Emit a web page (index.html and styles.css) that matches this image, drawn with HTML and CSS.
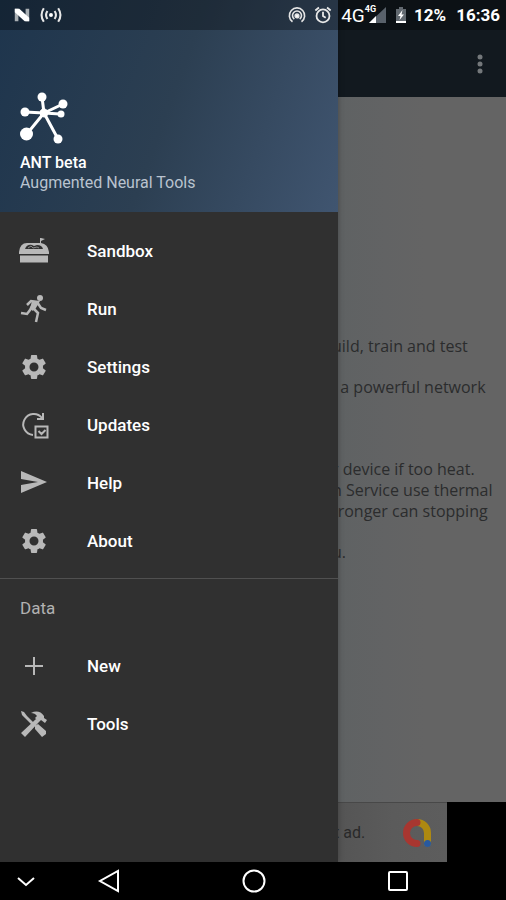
FILE: index.html
```html
<!DOCTYPE html>
<html lang="en">
<head>
<meta charset="utf-8">
<meta name="viewport" content="width=device-width, initial-scale=1">
<title>ANT beta</title>
<link rel="stylesheet" href="styles.css">
</head>
<body>
<svg hidden>
  <symbol id="gear" viewBox="0 0 24 24"><path d="M19.14 12.94c.04-.3.06-.61.06-.94s-.02-.64-.07-.94l2.03-1.58a.49.49 0 0 0 .12-.61l-1.92-3.32a.49.49 0 0 0-.59-.22l-2.39.96a7 7 0 0 0-1.62-.94l-.36-2.54a.48.48 0 0 0-.48-.41h-3.84a.48.48 0 0 0-.47.41l-.36 2.54c-.59.24-1.13.57-1.62.94l-2.39-.96a.48.48 0 0 0-.59.22L2.74 8.87a.48.48 0 0 0 .12.61l2.03 1.58a6 6 0 0 0 0 1.88l-2.03 1.58a.49.49 0 0 0-.12.61l1.92 3.32c.12.22.37.29.59.22l2.39-.96c.5.38 1.03.7 1.62.94l.36 2.54c.05.24.24.41.48.41h3.84c.24 0 .44-.17.47-.41l.36-2.54c.59-.24 1.13-.56 1.62-.94l2.39.96c.22.08.47 0 .59-.22l1.92-3.32a.48.48 0 0 0-.12-.61zM12 15.6a3.6 3.6 0 1 1 0-7.2 3.6 3.6 0 0 1 0 7.2z"/></symbol>
</svg>
<div class="screen">
  <div class="status">
    <svg class="status-icon" viewBox="0 0 20 20"><path d="M2 3h4v14H2zM14 3h4v14h-4z" fill="#aab0b4"/><path d="M2 3h5l11 10v4h-5L2 7z" fill="#fff"/></svg>
    <svg class="status-icon wide" viewBox="0 0 24 20" fill="none" stroke="#e8e8e8"><circle cx="12" cy="10" r="2.200" fill="#fff" stroke="none"/><path d="M8 5.500q-3 4.500 0 9M16 5.500q3 4.500 0 9M4 2.500q-5 7.500 0 15M20 2.500q5 7.500 0 15" stroke-width="2.300"/></svg>
    <span class="spacer"></span>
    <svg class="status-icon hotspot" viewBox="0 0 20 20" fill="none" stroke="#e4e4e4" stroke-width="1.800"><circle cx="10" cy="11" r="2" fill="#fff"/><path d="M5 17.500a8.500 8.500 0 1 1 10 0M7 14.500a5 5 0 1 1 6 0"/></svg>
    <svg class="status-icon alarm" viewBox="0 0 20 20" fill="none" stroke="#e8e8e8" stroke-width="2"><circle cx="10" cy="11" r="7.200"/><path d="M10 6.500V11l3 2M1.500 5l4-3.300M18.500 5l-4-3.300"/></svg>
    <span class="network">4G</span><span class="network-small">4G</span>
    <svg class="signal" viewBox="0 0 18 18"><path d="M18 1v16H1z" fill="#59616a"/><path d="M8 10v7H1z" fill="#fff"/></svg>
    <svg class="battery" viewBox="0 0 12 18"><path d="M4 1h4v2h3v14H1V3h3z" fill="#626970"/><path d="M1 15h10v2H1zM7.500 4 3 10h2.500L4.500 14 9 8.500H6.500z" fill="#fff"/></svg>
    <span class="status-text">12%</span>
    <span class="status-text clock">16:36</span>
  </div>

  <header class="appbar">
    <button class="more" aria-label="More options"><svg viewBox="0 0 6 20" fill="#74787b"><circle cx="3" cy="3" r="2.500"/><circle cx="3" cy="10" r="2.500"/><circle cx="3" cy="17" r="2.500"/></svg></button>
  </header>

  <main class="content">
    <p>uild, train and test</p>
    <p class="section-end">&nbsp; a powerful network</p>
    <p>r device if too heat.<br>n Service use thermal<br>tronger can stopping</p>
    <p>u.</p>
  </main>

  <div class="ad-row">
    <div class="ad">
      <span>t ad.</span>
      <svg class="ad-logo" viewBox="0 0 30 30" fill="none" stroke-width="7" stroke-linecap="round"><path d="M15 4.500a10.500 10.500 0 0 1 10.500 10.500v10" stroke="#ae8911"/><path d="M15 4.500a10.500 10.500 0 0 0 0 21" stroke="#a83630"/><circle cx="25.500" cy="25.500" r="3.500" fill="#28599f"/></svg>
    </div>
  </div>

  <aside class="drawer">
    <div class="account">
      <svg class="logo" viewBox="0 0 50 52" fill="#fff" stroke="#fff" stroke-linecap="round"><path d="m24 21-2-16M24 21 43 12M24 21 5 20M24 21l16 1M24 21 6 43M24 21l14 26" stroke-width="3"/><circle cx="24" cy="21" r="4"/><g stroke="none"><circle cx="22" cy="5" r="4.500"/><circle cx="43" cy="12" r="4.500"/><circle cx="5" cy="20" r="4.500"/><circle cx="41" cy="22" r="3.500"/><circle cx="6.500" cy="42" r="6.500"/><circle cx="38" cy="47" r="4.500"/></g></svg>
      <strong>ANT beta</strong>
      <span>Augmented Neural Tools</span>
    </div>
    <nav class="menu">
      <a href="#sandbox"><svg class="icon" viewBox="0 0 30 30"><path d="M0 16q1-9 8-9h13V2h1l4 1-4 2v2q7 1 8 9v2H0z"/><path d="M1 19.500h28v7H1z"/><path d="M6 13q2-5 7-4l2 1 3-1q5 0 6 4z" fill="#303030"/><path d="m9 12 3-2 2 2 4-1 2 1" fill="none" stroke="#8a8a8a"/></svg>Sandbox</a>
      <a href="#run"><svg class="icon" viewBox="0 0 30 30"><circle cx="21" cy="4" r="3"/><path d="m8 11 4-4 7 1-4 7 4 4-2 9M15 8l-4 8-3 4-6-1M18 8l4 6 5 2" fill="none" stroke="#b8b8b8" stroke-width="2.500"/><path d="m13 7 6 1-5 9-3-2z"/></svg>Run</a>
      <a href="#settings"><svg class="icon"><use href="#gear"/></svg>Settings</a>
      <a href="#updates"><svg class="icon outline" viewBox="0 0 30 30"><path d="M14 25A10.500 10.500 0 1 1 23 8M24 3v6h-6M16.500 16.500h12v11h-12zM19.500 21l3 3 4-4"/></svg>Updates</a>
      <a href="#help"><svg class="icon" viewBox="0 0 30 30"><path d="m2 3 26 11L2 25v-8l17-3L2 11z"/></svg>Help</a>
      <a href="#about"><svg class="icon"><use href="#gear"/></svg>About</a>
    </nav>
    <nav class="menu data" aria-labelledby="data-title">
      <h2 id="data-title">Data</h2>
      <a href="#new"><svg class="icon" viewBox="0 0 30 30"><path d="M14 6h2v8h8v2h-8v8h-2v-8H6v-2h8z"/></svg>New</a>
      <a href="#tools"><svg class="icon" viewBox="0 0 30 30"><path d="m2 2 3 1 3 4 8 8-2 2-8-8-3-3zM16 17l3-2 8 7v3l-4 3-7-8zM2 24 17 10l3 3L6 28zM12 4q8-4 13 3v2l3 2-2 3-4-3-2 2-4-4 2-2q-2-3-6-3z"/></svg>Tools</a>
    </nav>
  </aside>

  <div class="system-nav">
    <button aria-label="Hide"><svg viewBox="0 0 24 24"><path d="m4 9 8 7 8-7"/></svg></button>
    <button aria-label="Back"><svg viewBox="0 0 24 24"><path d="M21 2v20L3 12z"/></svg></button>
    <button aria-label="Home"><svg viewBox="0 0 24 24"><circle cx="12" cy="12" r="10.500"/></svg></button>
    <button aria-label="Recent apps"><svg viewBox="0 0 24 24"><rect x="3" y="3" width="18" height="18" rx="1"/></svg></button>
  </div>
</div>
</body>
</html>
```
FILE: styles.css
```css
* { box-sizing: border-box; }

body {
  margin: 0;
  background: #000;
  font-family: Roboto, sans-serif;
}

button {
  padding: 0;
  border: 0;
  background: none;
}

svg { display: block; }
svg[hidden] { display: none; }

.screen {
  --drawer: 338px;
  position: relative;
  display: flex;
  flex-direction: column;
  min-height: 100vh;
  overflow: hidden;
}

.status {
  position: relative;
  z-index: 3;
  display: flex;
  align-items: center;
  height: 30px;
  padding: 0 6px 0 12px;
  background: rgba(0, 0, 0, 0.3);
  color: #fff;
}

.status-icon { width: 20px; height: 18px; }
.wide { width: 22px; margin-left: 8px; }
.hotspot { margin-right: 6px; }
.alarm { margin-right: 8px; }
.spacer { flex: 1; }

.network { font-size: 19px; }

.network-small {
  align-self: flex-start;
  padding-top: 5px;
  font-size: 9px;
  font-weight: 700;
  line-height: 9px;
}

.signal { width: 18px; height: 18px; margin-left: -8px; }
.battery { width: 12px; height: 18px; margin: 0 7px 0 9px; }
.status-text { font-size: 17px; font-weight: 700; }
.clock { margin-left: 10px; }

.appbar {
  display: flex;
  align-items: center;
  justify-content: flex-end;
  height: 97px;
  margin-top: -30px;
  padding: 30px 23px 0;
  background: #12191f;
}

.more svg { width: 6px; height: 20px; }

.content {
  flex: 1;
  padding: 239px 0 0 calc(var(--drawer) - 6px);
  background: linear-gradient(90deg, #5f6263 67%, #626364 76%, #646464 84%);
  color: #2b2c2d;
  font-family: "Open Sans", sans-serif;
  font-size: 16px;
  line-height: 21px;
  white-space: nowrap;
}

.content p { margin: 0 0 20px; }
.content .section-end { margin-bottom: 61px; }

.ad-row { background: #000; }

.ad {
  display: flex;
  align-items: center;
  justify-content: space-between;
  width: 447px;
  max-width: 100%;
  height: 60px;
  padding: 0 15px 0 calc(var(--drawer) - 4px);
  border-top: 1px solid #484848;
  background: linear-gradient(90deg, #555 76%, #5b5b5b 88%, #5d5d5d);
  color: #292929;
  font-size: 16px;
}

.ad-logo { width: 30px; height: 30px; }

.drawer {
  position: absolute;
  inset: 0 auto 38px 0;
  width: var(--drawer);
  background: #303030;
  box-shadow: 0 0 6px rgba(0, 0, 0, 0.3);
}

.account {
  display: flex;
  flex-direction: column;
  height: 212px;
  padding: 92px 20px 0;
  background: linear-gradient(110deg, #1e354d 0%, #2c3f52 50%, #405570 100%);
  color: #b9c3cf;
  font-size: 16px;
  line-height: 20px;
}

.account strong { color: #fff; font-weight: 500; }
.logo { width: 50px; height: 52px; margin-bottom: 9px; }

.menu { padding: 10px 0 8px; }

.menu a {
  display: flex;
  align-items: center;
  gap: 38px;
  height: 58px;
  padding: 0 19px;
  color: #fff;
  font-size: 17px;
  font-weight: 500;
  text-decoration: none;
}

.icon { width: 30px; height: 30px; fill: #b8b8b8; }

.outline {
  fill: none;
  stroke: #b8b8b8;
  stroke-width: 2;
}

.data {
  padding: 0;
  border-top: 1px solid #505050;
}

.menu h2 {
  margin: 0;
  padding: 0 20px;
  color: #b2b2b2;
  font-size: 17px;
  font-weight: 400;
  line-height: 58px;
}

.system-nav {
  position: relative;
  display: grid;
  grid-template-columns: 83fr 145fr 144fr 108fr;
  align-items: center;
  height: 38px;
  padding: 0 12px 0 14px;
  background: #000;
}

.system-nav svg {
  width: 24px;
  height: 24px;
  fill: none;
  stroke: #fff;
  stroke-width: 2;
}
```
